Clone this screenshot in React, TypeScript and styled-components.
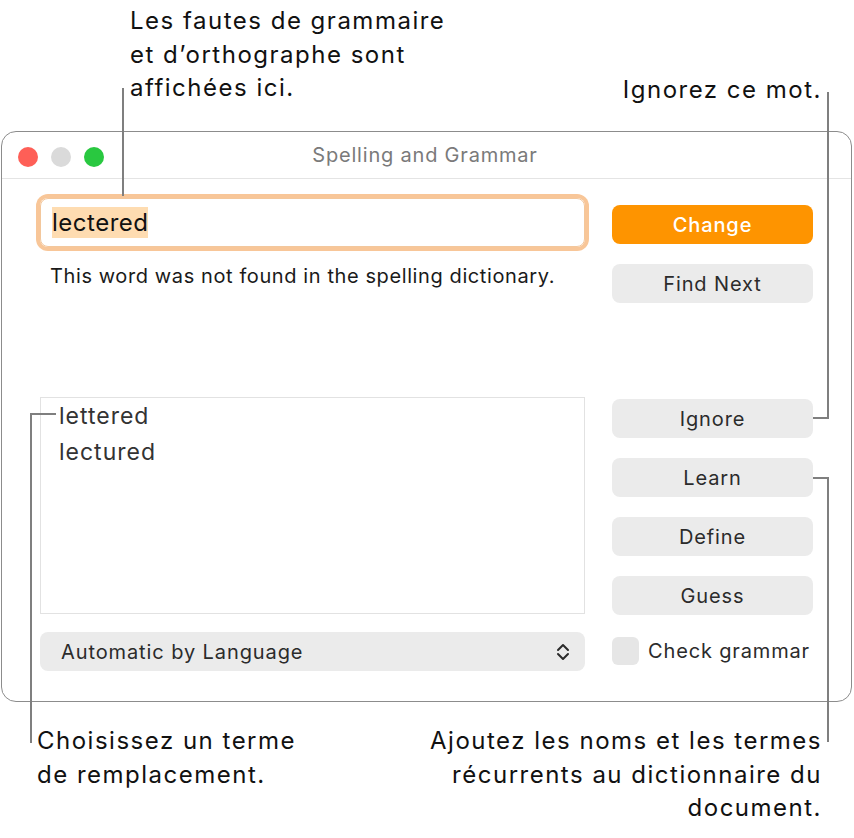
import React from 'react';
import styled, { createGlobalStyle } from 'styled-components';

const GlobalStyle = createGlobalStyle`
  html, body {
    margin: 0;
    padding: 0;
    background: #ffffff;
  }
  body {
    font-family: Inter, "Noto Sans", "Liberation Sans", sans-serif;
    -webkit-font-smoothing: antialiased;
  }
`;

const Page = styled.div`
  position: relative;
  width: 854px;
  height: 838px;
  display: flex;
  flex-direction: column;
  background: #fff;
  overflow: hidden;
`;

const TopArea = styled.div`
  height: 131px;
  display: flex;
  justify-content: space-between;
  align-items: flex-start;
`;

const BottomArea = styled.div`
  display: flex;
  justify-content: space-between;
  align-items: flex-start;
  padding-top: 22px;
`;

const Note = styled.div<{ $align?: 'left' | 'right' }>`
  font-size: 24px;
  line-height: 33.5px;
  color: #111;
  letter-spacing: 1.5px;
  text-align: ${p => p.$align ?? 'left'};
  white-space: nowrap;
`;

const Window = styled.div`
  margin-left: 1px;
  width: 851px;
  height: 571px;
  box-sizing: border-box;
  border: 1px solid #8c8c8c;
  border-radius: 15px;
  display: flex;
  flex-direction: column;
  background: #fff;
`;

const TitleBar = styled.div`
  position: relative;
  height: 46px;
  border-bottom: 1px solid #e4e4e4;
  display: flex;
  align-items: center;
  justify-content: center;
`;

const Lights = styled.div`
  position: absolute;
  left: 16px;
  top: 15px;
  display: flex;
  gap: 13px;
`;

const Light = styled.span<{ $color: string }>`
  width: 20px;
  height: 20px;
  border-radius: 50%;
  background: ${p => p.$color};
`;

const Title = styled.div`
  font-size: 20px;
  letter-spacing: 0.8px;
  color: #7a7a7a;
  margin-left: -3px;
`;

const Body = styled.div`
  flex: 1;
  display: flex;
  gap: 27px;
  padding: 0 38px 0 38px;
`;

const LeftColumn = styled.div`
  width: 545px;
  display: flex;
  flex-direction: column;
  padding-top: 19px;
`;

const RightColumn = styled.div`
  width: 201px;
  display: flex;
  flex-direction: column;
  padding-top: 26px;
`;

const WordField = styled.div`
  height: 49px;
  box-sizing: border-box;
  border-radius: 8px;
  border: 1px solid #f3c79c;
  box-shadow: 0 0 0 4px #f8c698;
  display: flex;
  align-items: center;
  padding-left: 11px;
`;

const Selected = styled.span`
  font-size: 24px;
  line-height: 31px;
  letter-spacing: 0.5px;
  color: #111;
  background: #fedcb1;
`;

const Message = styled.div`
  margin-top: 17px;
  margin-left: 10px;
  font-size: 20px;
  line-height: 24px;
  letter-spacing: 0.6px;
  color: #1a1a1a;
`;

const Guesses = styled.div`
  margin-top: 109px;
  height: 217px;
  box-sizing: border-box;
  border: 1px solid #e2e2e2;
  padding: 0 0 0 18px;
  display: flex;
  flex-direction: column;
`;

const GuessItem = styled.div`
  font-size: 23px;
  line-height: 36px;
  letter-spacing: 1px;
  color: #333;
`;

const Popup = styled.div`
  margin-top: 18px;
  height: 39px;
  border-radius: 8px;
  background: #ebebeb;
  display: flex;
  align-items: center;
  justify-content: space-between;
  padding: 0 14px 0 21px;
  font-size: 20px;
  letter-spacing: 0.9px;
  color: #2b2b2b;
`;

const Button = styled.div<{ $primary?: boolean; $gap?: number }>`
  height: 39px;
  margin-top: ${p => p.$gap ?? 20}px;
  border-radius: 8px;
  background: ${p => (p.$primary ? '#fe9400' : '#ebebeb')};
  color: ${p => (p.$primary ? '#fff' : '#2b2b2b')};
  font-size: 20px;
  letter-spacing: 0.9px;
  font-weight: ${p => (p.$primary ? 500 : 400)};
  display: flex;
  align-items: center;
  justify-content: center;
`;

const CheckRow = styled.label`
  margin-top: 22px;
  display: flex;
  align-items: center;
  gap: 9px;
  font-size: 20px;
  letter-spacing: 0.85px;
  color: #2b2b2b;
`;

const CheckBox = styled.span`
  width: 27px;
  height: 28px;
  border-radius: 6px;
  background: #e6e6e6;
`;

const Leaders = styled.svg`
  position: absolute;
  left: 0;
  top: 0;
  pointer-events: none;
`;

const Stepper = () => (
  <svg width="16" height="18" viewBox="0 0 16 18" fill="none" stroke="#2b2b2b" strokeWidth="2" strokeLinecap="round" strokeLinejoin="round">
    <path d="M3 7 L8 2 L13 7" />
    <path d="M3 11 L8 16 L13 11" />
  </svg>
);

const App: React.FC = () => {
  const suggestions = ['lettered', 'lectured'];
  const actions = ['Ignore', 'Learn', 'Define', 'Guess'];

  return (
    <Page>
      <GlobalStyle />
      <TopArea>
        <Note style={{ marginLeft: 130, marginTop: 4 }}>
          Les fautes de grammaire<br />
          et d’orthographe sont<br />
          affichées ici.
        </Note>
        <Note $align="right" style={{ marginRight: 32, marginTop: 73 }}>
          Ignorez ce mot.
        </Note>
      </TopArea>

      <Window>
        <TitleBar>
          <Lights>
            <Light $color="#fe5f57" />
            <Light $color="#dadada" />
            <Light $color="#29c840" />
          </Lights>
          <Title>Spelling and Grammar</Title>
        </TitleBar>
        <Body>
          <LeftColumn>
            <WordField>
              <Selected>lectered</Selected>
            </WordField>
            <Message>This word was not found in the spelling dictionary.</Message>
            <Guesses>
              {suggestions.map(s => (
                <GuessItem key={s}>{s}</GuessItem>
              ))}
            </Guesses>
            <Popup>
              Automatic by Language
              <Stepper />
            </Popup>
          </LeftColumn>
          <RightColumn>
            <Button $primary $gap={0}>Change</Button>
            <Button>Find Next</Button>
            {actions.map((a, i) => (
              <Button key={a} $gap={i === 0 ? 96 : 20}>{a}</Button>
            ))}
            <CheckRow>
              <CheckBox />
              Check grammar
            </CheckRow>
          </RightColumn>
        </Body>
      </Window>

      <BottomArea>
        <Note style={{ marginLeft: 37 }}>
          Choisissez un terme<br />
          de remplacement.
        </Note>
        <Note $align="right" style={{ marginRight: 32 }}>
          Ajoutez les noms et les termes<br />
          récurrents au dictionnaire du<br />
          document.
        </Note>
      </BottomArea>

      <Leaders width="854" height="838" viewBox="0 0 854 838" fill="none" stroke="#7f7f7f" strokeWidth="2">
        <path d="M123 88 V196" />
        <path d="M828 92 V418 H813" />
        <path d="M813 478 H828 V742" />
        <path d="M56 414 H31 V743" />
      </Leaders>
    </Page>
  );
};

export default App;
